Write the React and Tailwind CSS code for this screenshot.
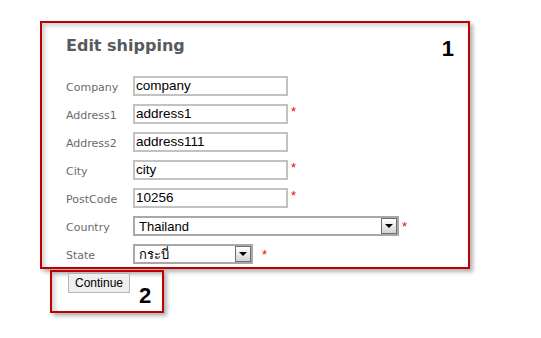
const fields = [
  { label: 'Company', value: 'company', req: false },
  { label: 'Address1', value: 'address1', req: true },
  { label: 'Address2', value: 'address111', req: false },
  { label: 'City', value: 'city', req: true },
  { label: 'PostCode', value: '10256', req: true },
]

function Star({ className = '' }) {
  return <span className={`text-[#ff0000] text-[13px] leading-none self-start ${className}`} style={{ fontFamily: 'Liberation Sans, sans-serif' }}>*</span>
}

function Label({ children }) {
  return <span className="w-[67px] text-[11px] leading-none pt-[3px] text-[#6a6a6a]">{children}</span>
}

function Select({ value, width }) {
  return (
    <div className={`${width} h-5 border-2 border-[#a8a8a8] bg-white flex items-center justify-between`}>
      <span className="pl-1 text-[13px] text-black leading-none" style={{ fontFamily: 'Liberation Sans, Noto Sans, sans-serif' }}>{value}</span>
      <span className="w-4 h-4 border border-[#6f6f6f] bg-gradient-to-b from-white to-[#d4d4d4] flex items-center justify-center">
        <span className="w-0 h-0 border-l-[4px] border-r-[4px] border-t-[4px] border-l-transparent border-r-transparent border-t-black" />
      </span>
    </div>
  )
}

export default function App() {
  return (
    <div className="w-[541px] h-[338px] bg-white pt-[21px] pl-[40px]" style={{ fontFamily: 'DejaVu Sans, Verdana, sans-serif' }}>
      <div className="relative w-[430px] h-[248px] border-2 border-[#c00000] shadow-[3px_3px_4px_rgba(0,0,0,0.3),inset_3px_3px_4px_rgba(0,0,0,0.18)] pl-[24px] pt-[12px]">
        <span className="absolute right-[14px] top-[9px] text-[22px] font-bold text-black" style={{ fontFamily: 'Liberation Sans, sans-serif' }}>1</span>
        <h2 className="text-[16px] font-bold text-[#575b60] leading-[22px]">Edit shipping</h2>
        <div className="mt-[19px] flex flex-col gap-2">
          {fields.map(f => (
            <div key={f.label} className="flex items-center h-5">
              <Label>{f.label}</Label>
              <div className="w-[155px] h-5 border-2 border-[#c2c2c2] bg-white flex items-center pl-[1px]">
                <span className="text-[13.5px] text-black leading-none" style={{ fontFamily: 'Liberation Sans, sans-serif' }}>{f.value}</span>
              </div>
              {f.req && <Star className="ml-[3px] mt-[1px]" />}
            </div>
          ))}
          <div className="flex items-center h-5">
            <Label>Country</Label>
            <Select value="Thailand" width="w-[266px]" />
            <Star className="ml-[3px] mt-[4px]" />
          </div>
          <div className="flex items-center h-5">
            <Label>State</Label>
            <Select value="กระบี่" width="w-[120px]" />
            <Star className="ml-[9px] mt-[4px]" />
          </div>
        </div>
      </div>
      <div className="relative mt-[1px] ml-[10px] w-[114px] h-[43px] border-2 border-[#c00000] shadow-[3px_3px_4px_rgba(0,0,0,0.3),inset_3px_3px_4px_rgba(0,0,0,0.18)] pl-[16px] pt-[1px] flex items-start">
        <button className="block h-[20px] px-[6px] bg-[#efefef] border border-[#b5b5b5] text-[12px] text-black leading-none" style={{ fontFamily: 'Liberation Sans, sans-serif' }}>Continue</button>
        <span className="absolute left-[87px] top-[13px] text-[22px] font-bold text-black leading-none" style={{ fontFamily: 'Liberation Sans, sans-serif' }}>2</span>
      </div>
    </div>
  )
}
